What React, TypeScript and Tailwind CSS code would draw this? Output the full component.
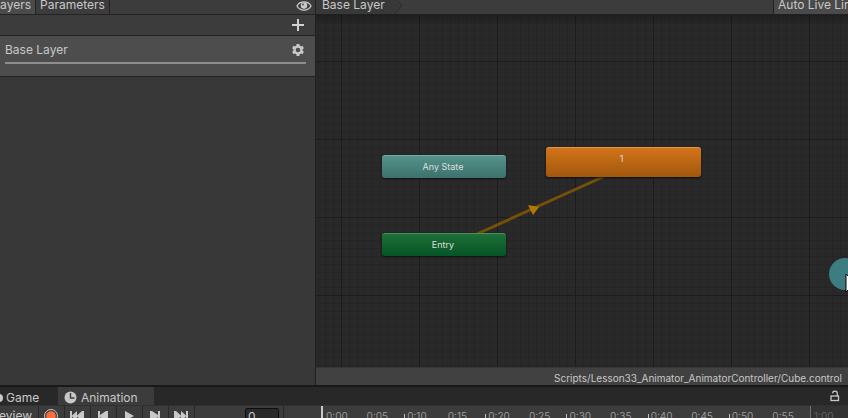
import type { ReactNode } from "react";

const times = [
  "0:00",
  "0:05",
  "0:10",
  "0:15",
  "0:20",
  "0:25",
  "0:30",
  "0:35",
  "0:40",
  "0:45",
  "0:50",
  "0:55",
];

const minor = [8, 16, 23, 31, 39, 47, 55, 62, 70];

const EyeIcon = () => (
  <svg width="16" height="12" viewBox="0 0 16 12">
    <path d="M1 6C4 .5 12 .5 15 6C12 11.500 4 11.500 1 6Z" fill="none" stroke="#c8c8c8" strokeWidth="1.400" />
    <circle cx="8" cy="5.500" r="3.200" fill="#c8c8c8" />
    <circle cx="7" cy="4.500" r="1" fill="#555" />
  </svg>
);

const PlusIcon = () => (
  <svg width="12" height="12" viewBox="0 0 12 12">
    <path d="M6 0V12M0 6H12" stroke="#d2d2d2" strokeWidth="2" />
  </svg>
);

const GearIcon = () => (
  <svg width="14" height="14" viewBox="0 0 14 14" stroke="#c8c8c8" fill="none">
    <circle cx="7" cy="7" r="3.500" strokeWidth="2.400" />
    <path
      d="M7 1V3M7 11V13M1.800 4L3.500 5M10.500 9L12.200 10M1.800 10L3.500 9M10.500 5L12.200 4"
      strokeWidth="3"
    />
  </svg>
);

const ClockIcon = () => (
  <svg width="13" height="13" viewBox="0 0 13 13">
    <circle cx="6.500" cy="6.500" r="6" fill="#c8c8c8" />
    <path d="M6.500 2V7H10.500" fill="none" stroke="#3c3c3c" strokeWidth="1.400" />
  </svg>
);

const LockIcon = () => (
  <svg width="10" height="12" viewBox="0 0 10 12" fill="none" stroke="#c8c8c8" strokeWidth="1.300">
    <rect x="1" y="6" width="7.500" height="4.500" />
    <path d="M7.300 6V3.200C7.300 .4 2.600 .4 2.600 3.200" />
  </svg>
);

interface ToolButtonProps {
  label: string;
  children: ReactNode;
}

const ToolButton = ({ label, children }: ToolButtonProps) => (
  <button
    type="button"
    aria-label={label}
    className="flex h-full w-[26px] shrink-0 items-center justify-center border-r border-[#282828]"
  >
    <svg width="16" height="14" viewBox="0 0 16 14" fill="#c8c8c8">
      {children}
    </svg>
  </button>
);

const LayersPanel = () => (
  <div className="flex w-[316px] shrink-0 flex-col border-r border-[#202020] bg-[#383838]">
    <div className="flex h-[15px] shrink-0 border-b border-[#232323] bg-[#3c3c3c]">
      <button
        type="button"
        className="flex w-9 items-center justify-end overflow-hidden border-r border-[#232323] bg-[#4b4b4b] pr-1 pb-1"
      >
        Layers
      </button>
      <button type="button" className="flex items-center border-r border-[#232323] px-1 pb-1">
        Parameters
      </button>
      <button type="button" aria-label="Toggle layers" className="mr-[3px] ml-auto pb-1">
        <EyeIcon />
      </button>
    </div>
    <div className="flex h-[21px] shrink-0 items-center justify-end border-b border-[#232323] bg-[#3c3c3c] pr-[11px]">
      <button type="button" aria-label="Add layer">
        <PlusIcon />
      </button>
    </div>
    <div className="h-[41px] shrink-0 border-b border-[#232323] bg-[#4d4d4d] pt-[6px] pr-[9px] pl-[5px]">
      <div className="flex h-[22px] items-center justify-between border-b-2 border-[#8e8e8e] pr-px pb-1">
        <span>Base Layer</span>
        <button type="button" aria-label="Layer settings">
          <GearIcon />
        </button>
      </div>
    </div>
  </div>
);

const Graph = () => (
  <div className="relative min-h-0 flex-1 overflow-hidden bg-[#292929] text-[9px] text-[#dedede]">
    <svg className="absolute inset-0 h-full w-full">
      <defs>
        <pattern id="grid" x="25" y="46" width="78" height="78" patternUnits="userSpaceOnUse">
          {minor.map((n) => (
            <path key={n} d={`M${n}.5 0V78M0 ${n}.5H78`} stroke="#252525" />
          ))}
          <path d="M.5 0V78M0 .5H78" stroke="#1c1c1c" />
        </pattern>
        <linearGradient id="shade" x2="0" y2="1">
          <stop offset="0" stopColor="#000" stopOpacity=".25" />
          <stop offset="1" stopColor="#000" stopOpacity="0" />
        </linearGradient>
      </defs>
      <rect width="100%" height="100%" fill="url(#grid)" />
      <rect width="100%" height="10" fill="url(#shade)" />
      <path d="M161 219L289 161" stroke="#755009" strokeWidth="3" />
      <path d="M212 190L223 192L217 200Z" fill="#b27a05" />
      <circle cx="529" cy="259" r="16" fill="#3b7d80" />
      <path d="M530 259V277L534 273L537 279L540 277L537 271H542Z" fill="#fff" stroke="#000" />
    </svg>
    <div className="absolute top-[140px] left-[66px] flex h-[23px] w-[124px] items-center justify-center rounded-[3px] border-t border-[#76aaa1] bg-linear-to-b from-[#559389] to-[#3c716d] pr-[2px] pb-px shadow-[0_1px_2px_#111]">
      Any State
    </div>
    <div className="absolute top-[218px] left-[66px] flex h-[23px] w-[124px] items-center justify-center rounded-[3px] border-t border-[#4d8f5c] bg-linear-to-b from-[#1d7037] to-[#045426] pr-[2px] pb-px shadow-[0_1px_2px_#111]">
      Entry
    </div>
    <div className="absolute top-[132px] left-[230px] flex h-[30px] w-[155px] justify-center rounded-[3px] border-t border-[#e09a4a] bg-linear-to-b from-[#d27419] to-[#a2570d] pt-[6px] pr-1 shadow-[0_1px_2px_#111]">
      1
    </div>
  </div>
);

const GraphPanel = () => (
  <div className="flex min-w-0 flex-1 flex-col">
    <div className="flex h-[15px] shrink-0 border-b border-[#202020] bg-[#3c3c3c]">
      <button type="button" className="flex items-center bg-[#383838] pb-1 pl-[6px]">
        Base Layer
      </button>
      <svg width="18" height="14" viewBox="0 0 18 14">
        <path d="M0 0H10L17 5L10 14H0Z" fill="#383838" />
        <path d="M12 0L17 5L10 14" fill="none" stroke="#2b2b2b" />
      </svg>
      <button
        type="button"
        className="ml-auto flex w-[75px] items-center overflow-hidden border-l border-[#202020] bg-[#4a4a4a] pb-1 pl-1 whitespace-nowrap"
      >
        Auto Live Link
      </button>
    </div>
    <Graph />
    <div className="flex h-[18px] shrink-0 items-center border-t border-[#353535] bg-[#414141] pt-[2px] text-[10px] leading-[14px]">
      <span className="ml-auto w-[294px] overflow-hidden whitespace-nowrap">
        Scripts/Lesson33_Animator_AnimatorController/Cube.control
      </span>
    </div>
  </div>
);

const Timeline = () => (
  <div className="flex min-w-0 flex-1 text-[10px] text-[#9a9a9a]">
    <div className="flex flex-1 border-l-2 border-[#c8c8c8] bg-[#3c3c3c]">
      {times.map((time, i) => (
        <div key={time} className="relative flex flex-1 items-center pl-[3px]">
          {i > 0 && i % 2 === 0 && (
            <span className="absolute top-2 left-0 h-3 w-px bg-[#c0c0c0]" />
          )}
          {time}
        </div>
      ))}
    </div>
    <div className="flex w-[38px] items-center border-l border-[#707070] bg-[#333] pl-[3px] text-[#606060]">
      1:00
    </div>
  </div>
);

const AnimationDock = () => (
  <div className="h-[33px] shrink-0 overflow-hidden border-t-2 border-[#191919] bg-[#282828]">
    <div className="flex h-[18px]">
      <button type="button" className="flex w-[58px] items-center gap-[3px] pt-[3px]">
        <svg width="3" height="8" viewBox="0 0 3 8">
          <circle cx="-1" cy="4" r="4" fill="#c8c8c8" />
        </svg>
        Game
      </button>
      <button type="button" className="flex w-24 items-center gap-1 bg-[#3c3c3c] pt-[3px] pl-[6px]">
        <ClockIcon />
        Animation
      </button>
      <button type="button" aria-label="Lock" className="mr-2 ml-auto">
        <LockIcon />
      </button>
    </div>
    <div className="flex h-[21px] border-t border-[#303030] bg-[#3c3c3c]">
      <button
        type="button"
        className="flex w-[39px] shrink-0 items-center justify-end overflow-hidden border-r border-[#282828] pr-[6px]"
      >
        Preview
      </button>
      <ToolButton label="Record">
        <circle cx="7" cy="7" r="6.500" fill="none" stroke="#c8c8c8" />
        <circle cx="7" cy="7" r="4.800" fill="#f9703e" />
      </ToolButton>
      <ToolButton label="First frame">
        <path d="M0 2H2V6.500L7 2V6.500L12 2H14V12H12L7 7.500V12L2 7.500V12H0Z" />
      </ToolButton>
      <ToolButton label="Previous frame">
        <path d="M2 2H4V6L10 2H12V12H10L4 8V12H2Z" />
      </ToolButton>
      <ToolButton label="Play">
        <path d="M3 2L12 7L3 12Z" />
      </ToolButton>
      <ToolButton label="Next frame">
        <path d="M12 2H10V6L4 2H2V12H4L10 8V12H12Z" />
      </ToolButton>
      <ToolButton label="Last frame">
        <path d="M14 2H12V6.500L7 2V6.500L2 2H0V12H2L7 7.500V12L12 7.500V12H14Z" />
      </ToolButton>
      <div className="flex w-[89px] shrink-0 justify-end border-r border-[#282828] pt-[2px] pr-1">
        <input
          type="text"
          aria-label="Frame"
          defaultValue="0"
          className="h-4 w-[34px] rounded-[2px] border border-[#0d0d0d] bg-[#2a2a2a] pl-[2px]"
        />
      </div>
      <div className="w-[37px] shrink-0" />
      <Timeline />
    </div>
  </div>
);

const App = () => {
  return (
    <div className="flex h-screen flex-col overflow-hidden bg-[#383838] font-[Inter,'Liberation_Sans',sans-serif] text-[12px] leading-none text-[#c8c8c8]">
      <div className="flex min-h-0 flex-1">
        <LayersPanel />
        <GraphPanel />
      </div>
      <AnimationDock />
    </div>
  );
};

export default App;
